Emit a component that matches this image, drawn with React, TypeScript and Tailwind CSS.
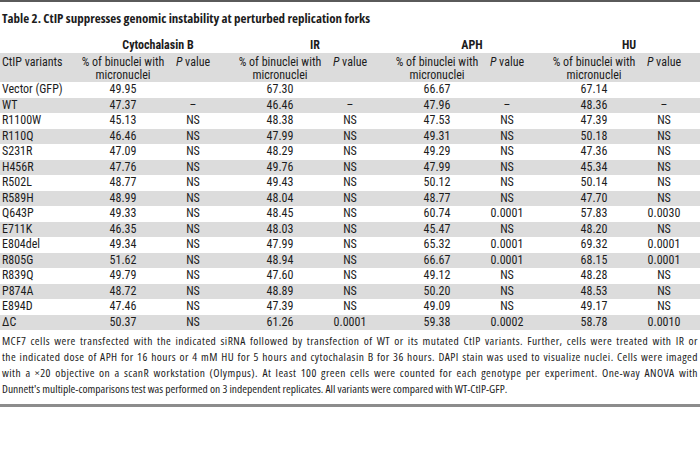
const rows: [string, string, string, string, string, string, string, string, string][] = [
  ['Vector (GFP)', '49.95', '', '67.30', '', '66.67', '', '67.14', ''],
  ['WT', '47.37', '–', '46.46', '–', '47.96', '–', '48.36', '–'],
  ['R1100W', '45.13', 'NS', '48.38', 'NS', '47.53', 'NS', '47.39', 'NS'],
  ['R110Q', '46.46', 'NS', '47.99', 'NS', '49.31', 'NS', '50.18', 'NS'],
  ['S231R', '47.09', 'NS', '48.29', 'NS', '49.29', 'NS', '47.36', 'NS'],
  ['H456R', '47.76', 'NS', '49.76', 'NS', '47.99', 'NS', '45.34', 'NS'],
  ['R502L', '48.77', 'NS', '49.43', 'NS', '50.12', 'NS', '50.14', 'NS'],
  ['R589H', '48.99', 'NS', '48.04', 'NS', '48.77', 'NS', '47.70', 'NS'],
  ['Q643P', '49.33', 'NS', '48.45', 'NS', '60.74', '0.0001', '57.83', '0.0030'],
  ['E711K', '46.35', 'NS', '48.03', 'NS', '45.47', 'NS', '48.20', 'NS'],
  ['E804del', '49.34', 'NS', '47.99', 'NS', '65.32', '0.0001', '69.32', '0.0001'],
  ['R805G', '51.62', 'NS', '48.94', 'NS', '66.67', '0.0001', '68.15', '0.0001'],
  ['R839Q', '49.79', 'NS', '47.60', 'NS', '49.12', 'NS', '48.28', 'NS'],
  ['P874A', '48.72', 'NS', '48.89', 'NS', '50.20', 'NS', '48.53', 'NS'],
  ['E894D', '47.46', 'NS', '47.39', 'NS', '49.09', 'NS', '49.17', 'NS'],
  ['ΔC', '50.37', 'NS', '61.26', '0.0001', '59.38', '0.0002', '58.78', '0.0010'],
];

const gridCols =
  'grid grid-cols-[88px_70px_70px_17px_70px_70px_17px_70px_70px_17px_70px_70px]';

function PHead() {
  return (
    <div className="flex justify-center whitespace-nowrap">
      <span>
        <span className="italic">P</span> value
      </span>
    </div>
  );
}

function PctHead() {
  return (
    <div className="flex flex-col items-center whitespace-nowrap">
      <span>% of binuclei with</span>
      <span>micronuclei</span>
    </div>
  );
}

export default function App() {
  return (
    <div className="w-[700px] h-[458px] bg-white text-[#1c1c1c] font-['Roboto_Condensed',sans-serif]">
      <div className="h-[2px] bg-[#5a5a5a]" />
      <div className="mt-[8px] pl-[2px] text-[13px] leading-[16px] font-bold font-['Open_Sans',sans-serif] [font-stretch:80%]">
        Table 2. CtIP suppresses genomic instability at perturbed replication forks
      </div>

      <div className={`${gridCols} mt-[11px] h-[16px] text-[12px] leading-[16px] font-bold`}>
        <div />
        <div className="col-span-2 text-center">Cytochalasin B</div>
        <div />
        <div className="col-span-2 text-center">IR</div>
        <div />
        <div className="col-span-2 text-center">APH</div>
        <div />
        <div className="col-span-2 text-center">HU</div>
      </div>

      <div className={`${gridCols} h-[29px] bg-[#dcdcdc] pt-[3px] text-[12px] leading-[13px]`}>
        <div className="pl-[2px] whitespace-nowrap">CtIP variants</div>
        <PctHead />
        <PHead />
        <div />
        <PctHead />
        <PHead />
        <div />
        <PctHead />
        <PHead />
        <div />
        <PctHead />
        <PHead />
      </div>

      <div className="flex flex-col">
        {rows.map((r, i) => (
          <div
            key={r[0]}
            className={`${gridCols} h-[15.5px] text-[12px] leading-[15.5px] ${i % 2 === 1 ? 'bg-[#dcdcdc]' : 'bg-white'}`}
          >
            <div className="pl-[2px]">{r[0]}</div>
            <div className="text-center">{r[1]}</div>
            <div className="text-center">{r[2]}</div>
            <div />
            <div className="text-center">{r[3]}</div>
            <div className="text-center">{r[4]}</div>
            <div />
            <div className="text-center">{r[5]}</div>
            <div className="text-center">{r[6]}</div>
            <div />
            <div className="text-center">{r[7]}</div>
            <div className="text-center">{r[8]}</div>
          </div>
        ))}
      </div>

      <div className="mt-[3px] px-[2px] text-[11.5px] leading-[16px] font-['Open_Sans',sans-serif] [font-stretch:75%]">
        <div className="text-justify [text-align-last:justify] tracking-[0.45px]">
          MCF7 cells were transfected with the indicated siRNA followed by transfection of WT or its mutated CtIP variants. Further, cells were treated with IR or
        </div>
        <div className="text-justify [text-align-last:justify] tracking-[0.45px]">
          the indicated dose of APH for 16 hours or 4 mM HU for 5 hours and cytochalasin B for 36 hours. DAPI stain was used to visualize nuclei. Cells were imaged
        </div>
        <div className="text-justify [text-align-last:justify] tracking-[0.45px]">
          with a ×20 objective on a scanR workstation (Olympus). At least 100 green cells were counted for each genotype per experiment. One-way ANOVA with
        </div>
        <div>
          Dunnett's multiple-comparisons test was performed on 3 independent replicates. All variants were compared with WT-CtIP-GFP.
        </div>
      </div>

      <div className="mt-[7px] h-[3px] bg-[#8c8c8c]" />
    </div>
  );
}
